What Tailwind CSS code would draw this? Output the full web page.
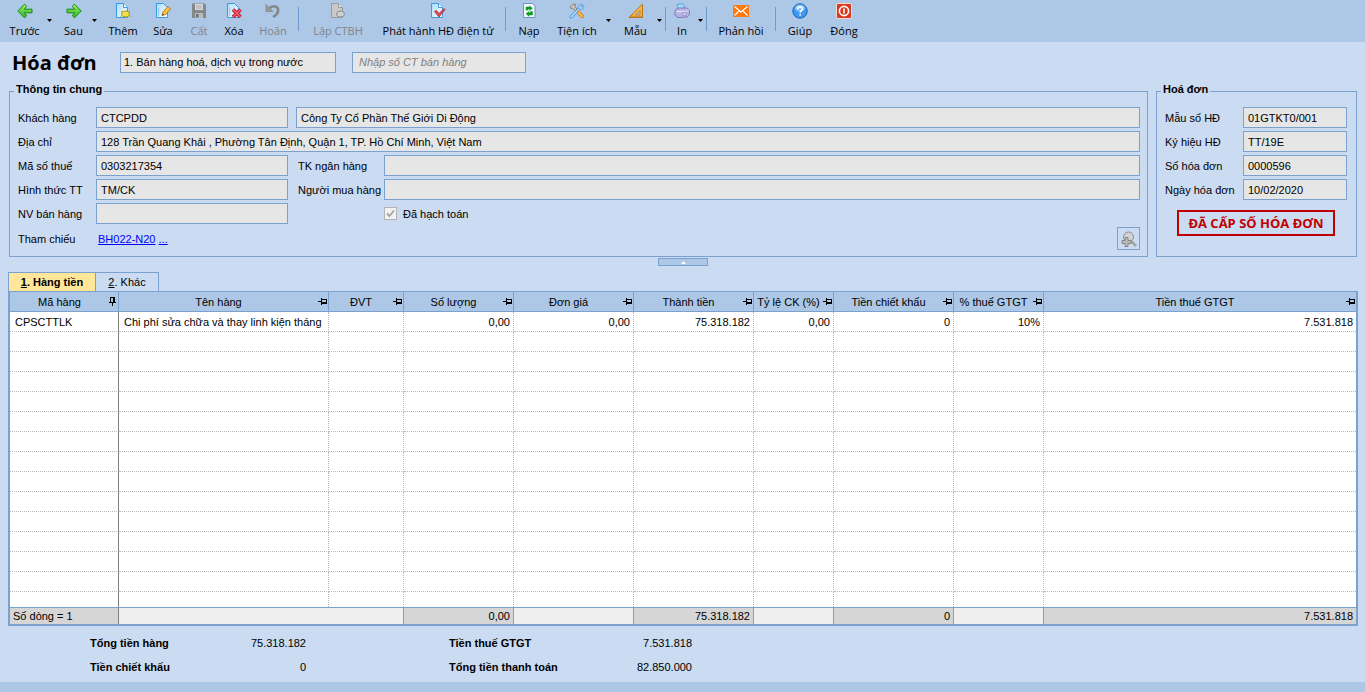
<!DOCTYPE html>
<html lang="vi">
<head>
    <meta charset="UTF-8">
    <meta name="viewport" content="width=device-width, initial-scale=1.0">
    <title>Hóa đơn</title>
    <script src="https://cdn.jsdelivr.net/npm/@tailwindcss/browser@4"></script>
</head>
<body class="min-h-screen flex flex-col bg-[#cbdbf1] text-black text-[11px] leading-4 font-['Liberation_Sans',Arial,sans-serif]">
    <!-- Shared icons -->
    <svg class="absolute size-0">
        <symbol id="pin" viewBox="0 0 9 7"><path d="M0 3h3v1H0zM3 0h1v7H3zM4 1h5v1H4zM8 1h1v5H8zM4 4h5v2H4z" fill="#000"/></symbol>
        <symbol id="pinned" viewBox="0 0 7 9"><path d="M1 0h5v1H1zM1 0h1v5H1zM4 0h2v5H4zM0 5h7v1H0zM3 6h1v3H3z" fill="#000"/></symbol>
        <symbol id="caret" viewBox="0 0 5 3"><path d="M0 0h5L2.500 3z" fill="#000"/></symbol>
        <linearGradient id="green" x1="0" y1="0" x2="0" y2="1"><stop offset="0" stop-color="#9bf06a"/><stop offset="1" stop-color="#2fb31d"/></linearGradient>
        <linearGradient id="paper" x1="0" y1="0" x2="1" y2="1"><stop offset="0" stop-color="#a9dbfb"/><stop offset="1" stop-color="#ffffff"/></linearGradient>
    </svg>

    <!-- Toolbar -->
    <header class="flex h-[42px] shrink-0 bg-[#adc7e6] pl-1 pt-[3px] text-[11px] whitespace-nowrap font-['Open_Sans','Noto_Sans',sans-serif]">
        <button class="w-[41px] flex flex-col items-center gap-1">
            <svg class="size-4" viewBox="0 0 16 16"><path d="M.8 8 7.500 1.200 9.700 3.300 7.300 6.200H15v3.600H7.300l2.400 2.900L7.500 14.800z" fill="url(#green)" stroke="#128a12" stroke-linejoin="round"/></svg>
            Trước
        </button>
        <button class="w-2 mr-1 flex justify-center pt-4" aria-label="Chọn chứng từ trước"><svg class="w-[5px] h-[3px]"><use href="#caret"/></svg></button>
        <button class="w-[33px] flex flex-col items-center gap-1">
            <svg class="size-4" viewBox="0 0 16 16"><path d="M15.200 8 8.500 1.200 6.300 3.300 8.700 6.200H1v3.600h7.700l-2.400 2.900 2.200 2.100z" fill="url(#green)" stroke="#128a12" stroke-linejoin="round"/></svg>
            Sau
        </button>
        <button class="w-2 flex justify-center pt-4" aria-label="Chọn chứng từ sau"><svg class="w-[5px] h-[3px]"><use href="#caret"/></svg></button>
        <button class="w-[50px] flex flex-col items-center gap-1">
            <svg class="size-4" viewBox="0 0 16 16"><path d="M1.500.5h7l4 4v10h-11z" fill="url(#paper)" stroke="#3b9be0"/><path d="M8.500.5v4h4" fill="#fff" stroke="#3b9be0"/><ellipse cx="10.500" cy="11" rx="4" ry="3" fill="#f4e04d" stroke="#a89a12"/><path d="M6 8l1 1M15 8l-1 1M5.500 13.500l1-.7M15.500 13.500l-1-.7" stroke="#a89a12"/></svg>
            Thêm
        </button>
        <button class="w-[30px] flex flex-col items-center gap-1">
            <svg class="size-4" viewBox="0 0 16 16"><path d="M1.500.5h7l4 4v10h-11z" fill="url(#paper)" stroke="#3b9be0"/><path d="M3.500 5v8" stroke="#8fcaf5"/><path d="M7 12.500 8 9l5-5.500L15.500 6l-5 5.500z" fill="#ffc53d" stroke="#b5791d"/><path d="M7 12.500l.6-2 1.400 1.300z" fill="#444"/></svg>
            Sửa
        </button>
        <button disabled class="w-[42px] flex flex-col items-center gap-1 text-[#808488]">
            <svg class="size-4" viewBox="0 0 16 16"><path d="M1 .5h12.500L15 2v13H1z" fill="#85888b"/><path d="M4 1h8v6H4z" fill="#d9d9d9"/><path d="M5 3h6M5 5h6" stroke="#aaa"/><path d="M4 10h8v5H4z" fill="#b9bbbd"/><path d="M5 11h2.500v3.500H5z" fill="#6c6f72"/></svg>
            Cất
        </button>
        <button class="w-7 flex flex-col items-center gap-1">
            <svg class="size-4" viewBox="0 0 16 16"><path d="M1.500.5h7l4 4v10h-11z" fill="url(#paper)" stroke="#3b9be0"/><path d="M3.500 5v8" stroke="#8fcaf5"/><path d="M7 6.500l7.500 7.500M14.500 6.500 7 14" stroke="#b3122a" stroke-width="3.600"/><path d="M7 6.500l7.500 7.500M14.500 6.500 7 14" stroke="#ef5366" stroke-width="1.800"/></svg>
            Xóa
        </button>
        <button disabled class="w-[50px] flex flex-col items-center gap-1 text-[#808488]">
            <svg class="size-4" viewBox="0 0 16 16"><path d="M4 5.500C8 1.500 14 3 13 8.500 12.500 11 10.500 12.500 8 14" fill="none" stroke="#85888b" stroke-width="2.600"/><path d="M1 1.500v7h7z" fill="#96999c" stroke="#7b7e82" stroke-width=".6"/></svg>
            Hoãn
        </button>
        <div class="w-px h-6 mt-1 mr-1 bg-[#7099d0]"></div>
        <button disabled class="w-[70px] flex flex-col items-center gap-1 text-[#808488]">
            <svg class="size-4" viewBox="0 0 16 16"><path d="M1.500.5h7l4 4v10h-11z" fill="#c9c9c9" stroke="#989a9c"/><path d="M8.500.5v4h4" fill="#e4e4e4" stroke="#989a9c"/><ellipse cx="10.500" cy="11" rx="4" ry="3" fill="#cfcfcf" stroke="#8c8e90"/></svg>
            Lập CTBH
        </button>
        <button class="w-[130px] flex flex-col items-center gap-1">
            <svg class="size-4" viewBox="0 0 16 16"><path d="M1.500.5h7l4 4v10h-11z" fill="url(#paper)" stroke="#3b9be0"/><path d="M8.500.5v4h4" fill="#fff" stroke="#3b9be0"/><path d="M4.500 8.500 6.500 7.500 9 10.500 14 5.500 15 6.500 9 14z" fill="#ee4b59" stroke="#a3202e" stroke-width=".8"/></svg>
            Phát hành HĐ điện tử
        </button>
        <div class="w-px h-6 mt-1 mx-[2px] bg-[#7099d0]"></div>
        <button class="w-[42px] flex flex-col items-center gap-1">
            <svg class="size-4" viewBox="0 0 16 16"><path d="M2.500.5h9l2.500 2.500v11.500H2.500z" fill="#f4f9ff" stroke="#6f93c4"/><path d="M5 7V4h3.500V3L11.500 5.200 8.500 7.500V6H7v1zM11.500 8.500v3.500H8v1.300L5 10.800 8 8.500V10h1.500V8.500z" fill="#0c9a1e" stroke="#0c9a1e" stroke-width=".5"/></svg>
            Nạp
        </button>
        <button class="w-[54px] flex flex-col items-center gap-1">
            <svg class="size-4" viewBox="0 0 16 16"><path d="M2 14 10.500 5.500" stroke="#3d8fd6" stroke-width="3" stroke-linecap="round"/><path d="M2 14 10.500 5.500" stroke="#b9e1fc" stroke-width="1.600" stroke-linecap="round"/><path d="M13.500 1.500 11.500 3.500l1 1 2-2c1 2-.5 4.500-3 4L9 5c0-2.500 2.500-4.500 4.500-3.500z" fill="#a7d8fa" stroke="#3d8fd6" stroke-width=".7"/><path d="M9.500 9.500 13.500 13.500" stroke="#c77a1a" stroke-width="3.400" stroke-linecap="round"/><path d="M9.500 9.500 13.500 13.500" stroke="#ffc04a" stroke-width="1.800" stroke-linecap="round"/><path d="M1 4 4 1l3 .5L5.500 3 8 6 6.500 7.500 3.500 5 2.500 6z" fill="#c9c5bd" stroke="#77726a" stroke-width=".8"/></svg>
            Tiện ích
        </button>
        <button class="w-2 mr-1 flex justify-center pt-4" aria-label="Chọn tiện ích"><svg class="w-[5px] h-[3px]"><use href="#caret"/></svg></button>
        <button class="w-[39px] flex flex-col items-center gap-1">
            <svg class="size-4" viewBox="0 0 16 16"><path d="M1 14.500 14.500 1v13.500z" fill="#f6b54c" stroke="#b8741a"/><path d="M7.500 12 12 7.500V12z" fill="#adc7e6" stroke="#b8741a" stroke-width=".8"/><path d="M3 14v-1.500M5 14v-1.500M7 14v-1M9 14v-1M11 14v-1M13 14v-1" stroke="#8c5510" stroke-width=".7"/></svg>
            Mẫu
        </button>
        <button class="w-2 flex justify-center pt-4" aria-label="Chọn mẫu"><svg class="w-[5px] h-[3px]"><use href="#caret"/></svg></button>
        <div class="w-px h-6 mt-1 mx-[2px] bg-[#7099d0]"></div>
        <button class="w-7 flex flex-col items-center gap-1">
            <svg class="size-4" viewBox="0 0 16 16"><path d="M3 1.500 9 .8l2 4.700H4z" fill="#9fdcff" stroke="#3f9fe0" stroke-width=".8"/><path d="M1 7.500 4 5h8.500L15.500 7.500v4L13 14l-9 .5L1 12z" fill="#b9b4e4" stroke="#7f79bd"/><path d="M2 8.500h8.500L15 7.500" fill="none" stroke="#e6e4fa"/><circle cx="10.500" cy="11" r="1.800" fill="#d9d6f6" stroke="#7f79bd" stroke-width=".7"/></svg>
            In
        </button>
        <button class="w-2 flex justify-center pt-4" aria-label="Chọn kiểu in"><svg class="w-[5px] h-[3px]"><use href="#caret"/></svg></button>
        <div class="w-px h-6 mt-1 mx-[2px] bg-[#7099d0]"></div>
        <button class="w-16 flex flex-col items-center gap-1">
            <svg class="size-4" viewBox="0 0 16 16"><path d="M0 2h16v12H0z" fill="#ff7a0c"/><path d="M1.500 3.500 8 9l6.500-5.500M1.500 12.500l4.500-4.500M14.500 12.500 10 8" fill="none" stroke="#fff" stroke-width="1.100"/></svg>
            Phản hồi
        </button>
        <div class="w-px h-6 mt-1 mx-[2px] bg-[#7099d0]"></div>
        <button class="w-[44px] flex flex-col items-center gap-1">
            <svg class="size-4" viewBox="0 0 16 16"><circle cx="8" cy="8" r="7.200" fill="#3d9af2" stroke="#1b5fb0"/><ellipse cx="8" cy="5" rx="5.200" ry="3.500" fill="#84c2fa"/><path d="M5.700 6.200C5.700 3.200 10.500 3.200 10.400 6 10.300 7.600 8.200 7.800 8.200 9.700M8.200 11v1.600" fill="none" stroke="#fff" stroke-width="1.700"/></svg>
            Giúp
        </button>
        <button class="w-11 flex flex-col items-center gap-1">
            <svg class="size-4" viewBox="0 0 16 16"><rect x=".5" y=".5" width="15" height="15" rx="1.500" fill="#d93a1e" stroke="#f6d8d0"/><circle cx="8" cy="8" r="4.600" fill="none" stroke="#fff" stroke-width="1.600"/><path d="M8 5.500v5" stroke="#fff" stroke-width="1.600"/></svg>
            Đóng
        </button>
    </header>

    <main class="flex-1 px-2 pr-[7px]">
        <!-- Title row -->
        <div class="flex h-10 items-center pl-1">
            <h1 class="w-[108px] pt-[2px] text-[20px] leading-6 font-bold font-['Open_Sans','Noto_Sans',sans-serif]">Hóa đơn</h1>
            <input class="w-[216px] h-[21px] px-[3px] border border-[#7ba2cf] bg-[#e6e6e6]" aria-label="Loại hóa đơn" value="1. Bán hàng hoá, dịch vụ trong nước" readonly>
            <input class="w-[174px] h-[21px] ml-4 px-[6px] border border-[#7ba2cf] bg-[#e6e6e6] italic placeholder:text-[#7f7f7f]" aria-label="Số CT bán hàng" placeholder="Nhập số CT bán hàng" readonly>
        </div>

        <div class="flex gap-2 px-px">
            <!-- General info -->
            <fieldset class="flex-1 border border-[#7ba2cf] pl-2 pr-[7px] pb-[6px]">
                <legend class="-ml-1 px-[2px] pb-1 leading-[14px] font-bold">Thông tin chung</legend>
                <div class="grid grid-cols-[78px_192px_96px_1fr] gap-y-[3px] pt-[7px] items-center">
                    <label for="customer">Khách hàng</label>
                    <input id="customer" class="h-[21px] px-1 border border-[#7ba2cf] bg-[#e6e6e6]" value="CTCPDD" readonly>
                    <input class="col-span-2 h-[21px] ml-2 px-1 border border-[#7ba2cf] bg-[#e6e6e6]" aria-label="Tên khách hàng" value="Công Ty Cổ Phần Thế Giới Di Động" readonly>

                    <label for="address">Địa chỉ</label>
                    <input id="address" class="col-span-3 h-[21px] px-1 border border-[#7ba2cf] bg-[#e6e6e6]" value="128 Trần Quang Khải , Phường Tân Định, Quận 1, TP. Hồ Chí Minh, Việt Nam" readonly>

                    <label for="tax">Mã số thuế</label>
                    <input id="tax" class="h-[21px] px-1 border border-[#7ba2cf] bg-[#e6e6e6]" value="0303217354" readonly>
                    <label for="bank" class="pl-[10px]">TK ngân hàng</label>
                    <input id="bank" class="h-[21px] px-1 border border-[#7ba2cf] bg-[#e6e6e6]" readonly>

                    <label for="payment">Hình thức TT</label>
                    <input id="payment" class="h-[21px] px-1 border border-[#7ba2cf] bg-[#e6e6e6]" value="TM/CK" readonly>
                    <label for="buyer" class="pl-[10px] whitespace-nowrap">Người mua hàng</label>
                    <input id="buyer" class="h-[21px] px-1 border border-[#7ba2cf] bg-[#e6e6e6]" readonly>

                    <label for="seller">NV bán hàng</label>
                    <input id="seller" class="h-[21px] px-1 border border-[#7ba2cf] bg-[#e6e6e6]" readonly>
                    <label class="col-start-4 flex items-center gap-[6px]">
                        <span class="relative flex">
                            <input type="checkbox" checked disabled class="appearance-none size-[13px] border border-[#b4b4b4] bg-[#f2f2f2]">
                            <svg class="absolute inset-0 size-[13px]" viewBox="0 0 13 13"><path d="M3 6.500 5.500 9 10 3.500" fill="none" stroke="#a3a3a3" stroke-width="1.800"/></svg>
                        </span>
                        Đã hạch toán
                    </label>

                    <span>Tham chiếu</span>
                    <div class="pl-[2px] text-[#0000ff]"><a href="#" class="underline">BH022-N20</a> <a href="#" class="underline">...</a></div>
                    <button disabled class="col-start-4 justify-self-end size-[23px] flex items-center justify-center border border-[#7ba2cf]" aria-label="Phóng to">
                        <svg class="size-4" viewBox="0 0 16 16"><path d="M10.500 10.500 15 15" stroke="#a3a3a3" stroke-width="2.600"/><circle cx="7.500" cy="6" r="5" fill="#d2d2d2" stroke="#8f8f8f"/><path d="M4 6.500h3v3h3v3H7v3H4v-3H1v-3h3z" fill="#b9b9b9" stroke="#808080" stroke-width=".9"/></svg>
                    </button>
                </div>
            </fieldset>

            <!-- Invoice info -->
            <fieldset class="w-[201px] border border-[#7ba2cf] pl-2 pr-[9px]">
                <legend class="-ml-1 px-[2px] pb-1 leading-[14px] font-bold">Hoá đơn</legend>
                <div class="grid grid-cols-[78px_1fr] gap-y-[3px] pt-[7px] items-center">
                    <label for="form">Mẫu số HĐ</label>
                    <input id="form" class="min-w-0 h-[21px] px-1 border border-[#7ba2cf] bg-[#e6e6e6]" value="01GTKT0/001" readonly>
                    <label for="serial">Ký hiệu HĐ</label>
                    <input id="serial" class="min-w-0 h-[21px] px-1 border border-[#7ba2cf] bg-[#e6e6e6]" value="TT/19E" readonly>
                    <label for="number">Số hóa đơn</label>
                    <input id="number" class="min-w-0 h-[21px] px-1 border border-[#7ba2cf] bg-[#e6e6e6]" value="0000596" readonly>
                    <label for="date" class="whitespace-nowrap">Ngày hóa đơn</label>
                    <input id="date" class="min-w-0 h-[21px] px-1 border border-[#7ba2cf] bg-[#e6e6e6]" value="10/02/2020" readonly>
                </div>
                <div class="w-[158px] h-[26px] mt-[10px] mx-auto flex items-center justify-center border-2 border-[#c00000] text-[#c00000] text-[13px] font-bold whitespace-nowrap font-['Open_Sans','Noto_Sans',sans-serif]">ĐÃ CẤP SỐ HÓA ĐƠN</div>
            </fieldset>
        </div>

        <!-- Collapse handle -->
        <button class="block w-[50px] h-2 mt-px mx-auto border border-[#7ba2cf] bg-[#adc7e6]" aria-label="Thu gọn">
            <svg class="w-[5px] h-[3px] mx-auto" viewBox="0 0 5 3"><path d="M2.500 0 5 3H0z" fill="#fff"/></svg>
        </button>

        <!-- Tabs -->
        <div class="flex mt-[6px]">
            <button class="w-[88px] h-[19px] border border-b-0 border-[#7ba2cf] bg-[#ffe699] font-bold"><span class="underline">1</span>. Hàng tiền</button>
            <button class="w-[63px] h-[19px] border border-b-0 border-l-0 border-[#7ba2cf]"><span class="underline">2</span>. Khác</button>
        </div>

        <!-- Detail lines -->
        <div class="border-2 border-t border-[#7ba2cf] bg-white">
            <table class="w-full table-fixed border-separate border-spacing-0 whitespace-nowrap">
                <colgroup>
                    <col class="w-[109px]">
                    <col class="w-[210px]">
                    <col class="w-[75px]">
                    <col class="w-[110px]">
                    <col class="w-[120px]">
                    <col class="w-[120px]">
                    <col class="w-[80px]">
                    <col class="w-[120px]">
                    <col class="w-[90px]">
                    <col>
                </colgroup>
                <thead class="bg-[#adc7e6] [&_th]:h-5 [&_th]:p-0 [&_th]:pr-px [&_th]:font-normal [&_th]:border-b [&_th]:border-r [&_th]:border-[#7ba2cf] [&_div]:flex [&_div]:items-center [&_span]:flex-1">
                    <tr>
                        <th><div><span>Mã hàng</span><svg class="w-[7px] h-[9px] mr-px"><use href="#pinned"/></svg></div></th>
                        <th><div><span>Tên hàng</span><svg class="w-[9px] h-[7px]"><use href="#pin"/></svg></div></th>
                        <th><div><span>ĐVT</span><svg class="w-[9px] h-[7px]"><use href="#pin"/></svg></div></th>
                        <th><div><span>Số lượng</span><svg class="w-[9px] h-[7px]"><use href="#pin"/></svg></div></th>
                        <th><div><span>Đơn giá</span><svg class="w-[9px] h-[7px]"><use href="#pin"/></svg></div></th>
                        <th><div><span>Thành tiền</span><svg class="w-[9px] h-[7px]"><use href="#pin"/></svg></div></th>
                        <th><div><span>Tỷ lệ CK (%)</span><svg class="w-[9px] h-[7px]"><use href="#pin"/></svg></div></th>
                        <th><div><span>Tiền chiết khấu</span><svg class="w-[9px] h-[7px]"><use href="#pin"/></svg></div></th>
                        <th><div><span>% thuế GTGT</span><svg class="w-[9px] h-[7px]"><use href="#pin"/></svg></div></th>
                        <th class="border-r-0!"><div><span>Tiền thuế GTGT</span><svg class="w-[9px] h-[7px]"><use href="#pin"/></svg></div></th>
                    </tr>
                </thead>
                <tbody id="lines" class="text-right [&_td]:h-5 [&_td]:py-0 [&_td]:pr-[3px] [&_td]:border-b [&_td]:border-r [&_td]:border-dotted [&_td]:border-[#b8b8b8] [&_td:first-child]:border-r-[#808080] [&_td:first-child]:[border-right-style:solid] [&_td:last-child]:border-r-0 [&_tr:last-child_td]:h-[15px] [&_tr:last-child_td]:border-b-0">
                    <tr>
                        <td class="pl-[5px] text-left">CPSCTTLK</td>
                        <td class="pl-[5px] text-left">Chi phí sửa chữa và thay linh kiện tháng</td>
                        <td></td>
                        <td>0,00</td>
                        <td>0,00</td>
                        <td>75.318.182</td>
                        <td>0,00</td>
                        <td>0</td>
                        <td>10%</td>
                        <td>7.531.818</td>
                    </tr>
                </tbody>
                <tfoot class="text-right [&_td]:h-[17px] [&_td]:py-0 [&_td]:pr-[3px] [&_td]:border-t [&_td]:border-r [&_td]:border-[#7ba2cf] [&_td:last-child]:border-r-0">
                    <tr class="bg-[#efefef]">
                        <td class="pl-[3px] text-left bg-[#d6d6d6] border-r-[#808080]!">Số dòng = 1</td>
                        <td colspan="2"></td>
                        <td class="bg-[#d6d6d6]">0,00</td>
                        <td></td>
                        <td class="bg-[#d6d6d6]">75.318.182</td>
                        <td></td>
                        <td class="bg-[#d6d6d6]">0</td>
                        <td></td>
                        <td class="bg-[#d6d6d6]">7.531.818</td>
                    </tr>
                </tfoot>
            </table>
        </div>

        <!-- Totals -->
        <dl class="grid grid-cols-[140px_76px_143px_140px_103px] gap-y-2 pl-[82px] pt-[9px] pb-[7px] whitespace-nowrap [&_dt]:font-bold [&_dd]:text-right">
            <dt>Tổng tiền hàng</dt><dd>75.318.182</dd>
            <dt class="col-start-4">Tiền thuế GTGT</dt><dd>7.531.818</dd>
            <dt>Tiền chiết khấu</dt><dd>0</dd>
            <dt class="col-start-4">Tổng tiền thanh toán</dt><dd>82.850.000</dd>
        </dl>
    </main>

    <footer class="h-[10px] shrink-0 bg-[#adc7e6]"></footer>

    <script>
        // Fill the rest of the grid with blank lines
        const lines = document.getElementById('lines');
        for (let i = 0; i < 14; i++) {
            const row = lines.insertRow();
            for (let j = 0; j < 10; j++) row.insertCell();
        }
    </script>
</body>
</html>
